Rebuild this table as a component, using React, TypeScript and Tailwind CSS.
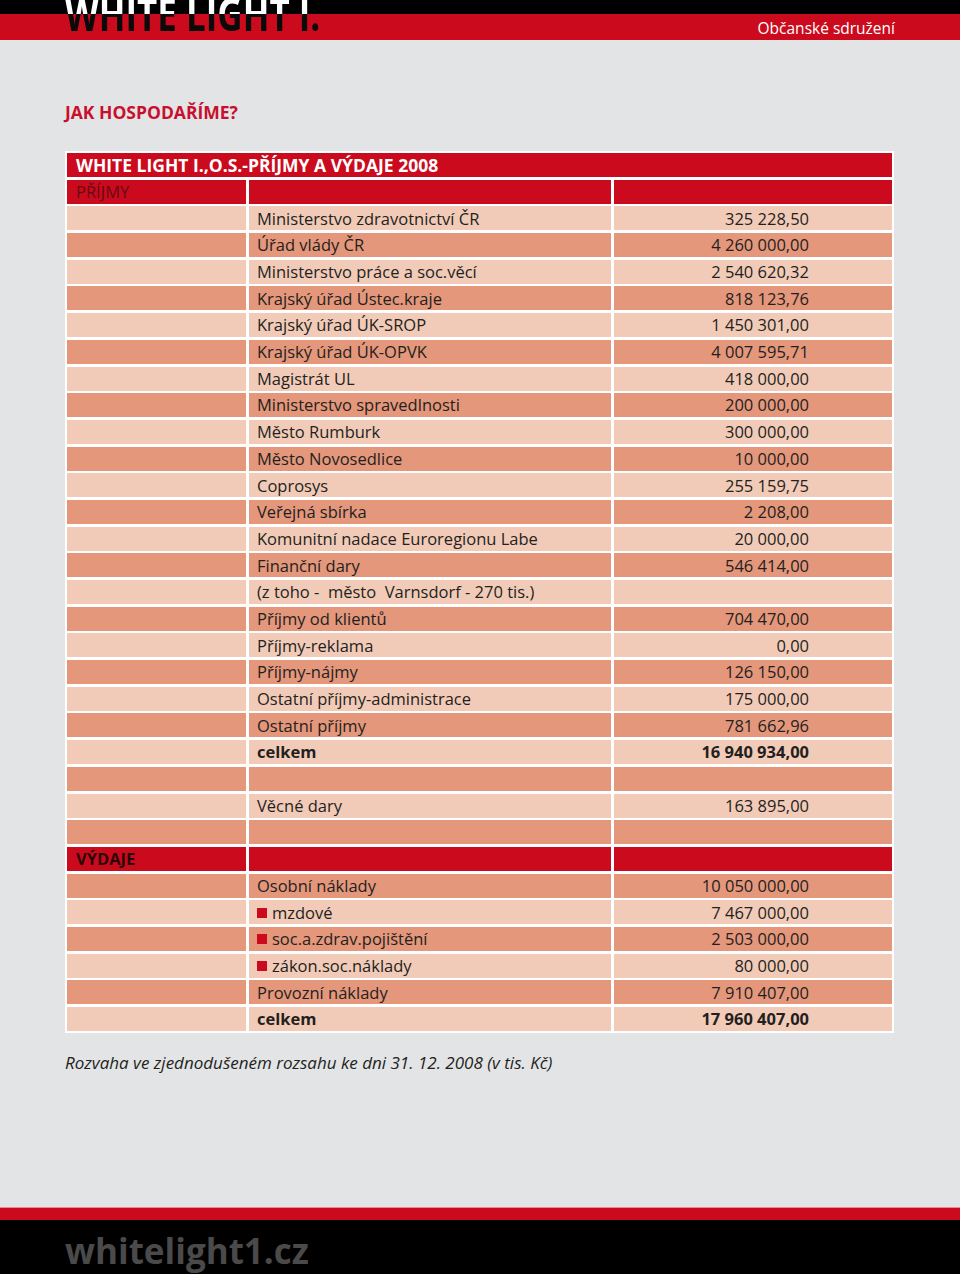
type Row = {
  label?: string;
  amount?: string;
  tone: "light" | "dark";
  bold?: boolean;
  bullet?: boolean;
};

const INCOME: Row[] = [
  { label: "Ministerstvo zdravotnictví ČR", amount: "325 228,50", tone: "light" },
  { label: "Úřad vlády ČR", amount: "4 260 000,00", tone: "dark" },
  { label: "Ministerstvo práce a soc.věcí", amount: "2 540 620,32", tone: "light" },
  { label: "Krajský úřad Ústec.kraje", amount: "818 123,76", tone: "dark" },
  { label: "Krajský úřad ÚK-SROP", amount: "1 450 301,00", tone: "light" },
  { label: "Krajský úřad ÚK-OPVK", amount: "4 007 595,71", tone: "dark" },
  { label: "Magistrát UL", amount: "418 000,00", tone: "light" },
  { label: "Ministerstvo spravedlnosti", amount: "200 000,00", tone: "dark" },
  { label: "Město Rumburk", amount: "300 000,00", tone: "light" },
  { label: "Město Novosedlice", amount: "10 000,00", tone: "dark" },
  { label: "Coprosys", amount: "255 159,75", tone: "light" },
  { label: "Veřejná sbírka", amount: "2 208,00", tone: "dark" },
  { label: "Komunitní nadace Euroregionu Labe", amount: "20 000,00", tone: "light" },
  { label: "Finanční dary", amount: "546 414,00", tone: "dark" },
  { label: "(z toho -  město  Varnsdorf - 270 tis.)", tone: "light" },
  { label: "Příjmy od klientů", amount: "704 470,00", tone: "dark" },
  { label: "Příjmy-reklama", amount: "0,00", tone: "light" },
  { label: "Příjmy-nájmy", amount: "126 150,00", tone: "dark" },
  { label: "Ostatní příjmy-administrace", amount: "175 000,00", tone: "light" },
  { label: "Ostatní příjmy", amount: "781 662,96", tone: "dark" },
  { label: "celkem", amount: "16 940 934,00", tone: "light", bold: true },
  { tone: "dark" },
  { label: "Věcné dary", amount: "163 895,00", tone: "light" },
  { tone: "dark" },
];

const EXPENSES: Row[] = [
  { label: "Osobní náklady", amount: "10 050 000,00", tone: "dark" },
  { label: "mzdové", amount: "7 467 000,00", tone: "light", bullet: true },
  { label: "soc.a.zdrav.pojištění", amount: "2 503 000,00", tone: "dark", bullet: true },
  { label: "zákon.soc.náklady", amount: "80 000,00", tone: "light", bullet: true },
  { label: "Provozní náklady", amount: "7 910 407,00", tone: "dark" },
  { label: "celkem", amount: "17 960 407,00", tone: "light", bold: true },
];

function DataRow({ row }: { row: Row }) {
  const bg = row.tone === "light" ? "bg-[#f2cbb8]" : "bg-[#e4977b]";
  const weight = row.bold ? "font-bold" : "font-normal";
  return (
    <>
      <div className={`h-[24px] ${bg}`} />
      <div className={`h-[24px] ${bg} flex items-center pl-[8px] pt-[1px] whitespace-pre ${weight}`}>
        {row.bullet && <span className="w-[10px] h-[10px] bg-[#cc0a1e] mr-[5px]" />}
        {row.label}
      </div>
      <div className={`h-[24px] ${bg} flex items-center justify-end pr-[83px] pt-[1px] ${weight}`}>
        {row.amount}
      </div>
    </>
  );
}

export default function App() {
  return (
    <div className="w-[960px] h-[1274px] bg-[#e3e4e6] font-['Open_Sans',sans-serif] text-[#231f20] flex flex-col overflow-hidden">
      <header className="relative h-[40px] shrink-0">
        <div className="h-[14px] bg-black" />
        <div className="h-[26px] bg-[#cc0a1e] flex items-center justify-end pr-[65px] pt-[4px]">
          <span className="text-white text-[15.5px] leading-none">Občanské sdružení</span>
        </div>
        <div className="absolute left-[65px] top-[-10px] origin-left scale-x-[0.76] text-[46px] leading-none font-bold whitespace-nowrap bg-[linear-gradient(to_bottom,#ffffff_24px,#0a0a0a_24px)] bg-clip-text text-transparent">
          WHITE LIGHT I.
        </div>
      </header>

      <main className="h-[1167px] shrink-0 pl-[65px] pt-[60px]">
        <h1 className="text-[#c8102e] text-[17.5px] leading-[24px] font-bold">JAK HOSPODAŘÍME?</h1>

        <div className="mt-[27px] w-[829px] bg-white p-[2px] grid grid-cols-[179px_362px_278px] gap-x-[3px] gap-y-[2.7px] text-[16.5px] leading-none">
          <div className="col-span-3 h-[24px] bg-[#cc0a1e] flex items-center pl-[9px] pt-[1px] text-white font-bold text-[17.5px]">
            WHITE LIGHT I.,O.S.-PŘÍJMY A VÝDAJE 2008
          </div>
          <div className="h-[24px] bg-[#cc0a1e] flex items-center pl-[9px] pt-[1px] text-[#640b14] text-[16.5px]">PŘÍJMY</div>
          <div className="h-[24px] bg-[#cc0a1e]" />
          <div className="h-[24px] bg-[#cc0a1e]" />
          {INCOME.map((r, i) => (
            <DataRow key={`i${i}`} row={r} />
          ))}
          <div className="h-[24px] bg-[#cc0a1e] flex items-center pl-[9px] pt-[1px] text-[#2a0808] font-bold text-[16.5px]">VÝDAJE</div>
          <div className="h-[24px] bg-[#cc0a1e]" />
          <div className="h-[24px] bg-[#cc0a1e]" />
          {EXPENSES.map((r, i) => (
            <DataRow key={`e${i}`} row={r} />
          ))}
        </div>

        <p className="mt-[19px] italic text-[17px] leading-[22px]">
          Rozvaha ve zjednodušeném rozsahu ke dni 31. 12. 2008 (v tis. Kč)
        </p>
      </main>

      <footer className="flex-1 flex flex-col">
        <div className="h-[13px] bg-[#cc0a1e] border-t border-[#e98a94]" />
        <div className="flex-1 bg-black pl-[65px] flex items-end pb-[1px]">
          <span className="text-[#4a4a4a] text-[35px] leading-[44px] font-bold">whitelight1.cz</span>
        </div>
      </footer>
    </div>
  );
}
